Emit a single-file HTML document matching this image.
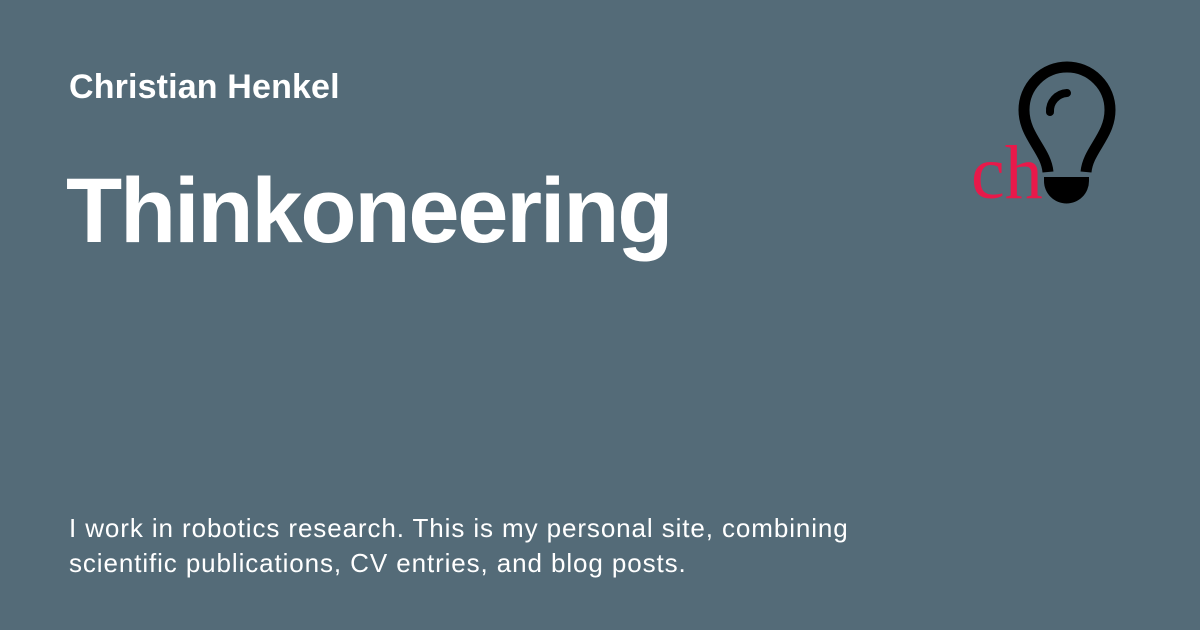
<!DOCTYPE html>
<html><head><style>
html,body{margin:0;padding:0;}
body{width:1200px;height:630px;background:#546b78;position:relative;overflow:hidden;font-family:"Liberation Sans",sans-serif;color:#fff;}
.a{position:absolute;left:69px;top:68px;font-size:34px;font-weight:bold;letter-spacing:0.15px;white-space:nowrap;}
.t{position:absolute;left:66px;top:159px;font-size:92px;font-weight:bold;letter-spacing:-2.2px;white-space:nowrap;}
.d{position:absolute;left:69px;top:511px;font-size:26px;letter-spacing:0.9px;line-height:35px;white-space:nowrap;}
.ch{position:absolute;left:971px;top:135px;font-family:"Liberation Serif",serif;font-size:76px;color:#e8194a;line-height:1;}
</style></head><body>
<div class="a">Christian Henkel</div>
<div class="t">Thinkoneering</div>
<div class="d">I work in robotics research. This is my personal site, combining<br>scientific publications, CV entries, and blog posts.</div>
<svg style="position:absolute;left:0;top:0" width="1200" height="630">
<path d="M1048 172 C1046 150 1024 136 1024 110 A43 43 0 0 1 1110 110 C1110 136 1088 150 1086 172" fill="none" stroke="#000" stroke-width="11"/>
<path d="M1050 112 A18 18 0 0 1 1067 93" fill="none" stroke="#000" stroke-width="8" stroke-linecap="round"/>
<path d="M1044 177 H1089 V181 A22 22 0 0 1 1044 181 Z" fill="#000"/>
</svg>
<div class="ch">ch</div>
</body></html>
